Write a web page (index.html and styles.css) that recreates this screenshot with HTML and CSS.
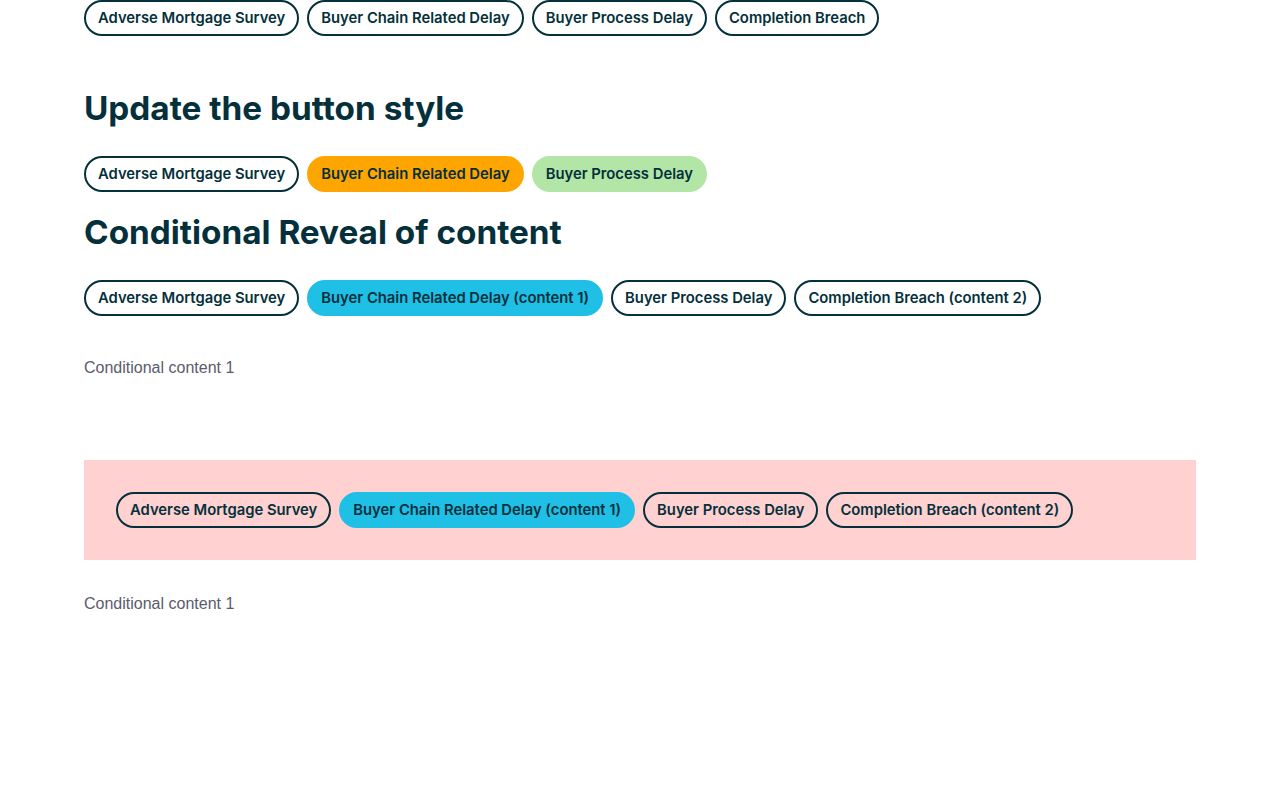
FILE: index.html
```html
<!DOCTYPE html>
<html lang="en">
<head>
<meta charset="utf-8">
<title>Buttons</title>
<link rel="stylesheet" href="styles.css">
</head>
<body>
<main class="page">
  <div class="pills">
    <button class="pill">Adverse Mortgage Survey</button>
    <button class="pill">Buyer Chain Related Delay</button>
    <button class="pill">Buyer Process Delay</button>
    <button class="pill">Completion Breach</button>
  </div>

  <h2 class="heading heading-first">Update the button style</h2>
  <div class="pills">
    <button class="pill">Adverse Mortgage Survey</button>
    <button class="pill pill-orange">Buyer Chain Related Delay</button>
    <button class="pill pill-green">Buyer Process Delay</button>
  </div>

  <h2 class="heading heading-second">Conditional Reveal of content</h2>
  <div class="pills">
    <button class="pill">Adverse Mortgage Survey</button>
    <button class="pill pill-blue">Buyer Chain Related Delay (content 1)</button>
    <button class="pill">Buyer Process Delay</button>
    <button class="pill">Completion Breach (content 2)</button>
  </div>
  <p class="content">Conditional content 1</p>

  <section class="panel">
    <div class="pills">
      <button class="pill">Adverse Mortgage Survey</button>
      <button class="pill pill-blue">Buyer Chain Related Delay (content 1)</button>
      <button class="pill">Buyer Process Delay</button>
      <button class="pill">Completion Breach (content 2)</button>
    </div>
  </section>
  <p class="content content-after-panel">Conditional content 1</p>
</main>
</body>
</html>
```

FILE: styles.css
```css
html, body {
  margin: 0;
  padding: 0;
  background: #ffffff;
}

.page {
  margin: 0 84px;
  color: #04303b;
}

.pills {
  display: flex;
  flex-wrap: wrap;
  gap: 8px;
}

.pill {
  height: 36px;
  box-sizing: border-box;
  padding: 0 12px;
  border: 2px solid #04303b;
  border-radius: 18px;
  background: transparent;
  color: #04303b;
  font-family: "Inter", "Noto Sans", sans-serif;
  font-weight: 600;
  font-size: 14.8px;
  line-height: 32px;
  cursor: pointer;
}

.pill-orange {
  background: #ffa500;
  border-color: #ffa500;
}

.pill-green {
  background: #b3e6a6;
  border-color: #b3e6a6;
}

.pill-blue {
  background: #1fbfe6;
  border-color: #1fbfe6;
}

.heading {
  font-family: "Inter", "Noto Sans", sans-serif;
  font-weight: 700;
  font-size: 33.3px;
  line-height: 40px;
  margin: 0;
  color: #04303b;
}

.heading-first {
  margin-top: 52px;
  margin-bottom: 28px;
}

.heading-second {
  margin-top: 20px;
  margin-bottom: 28px;
}

.content {
  font-family: "Liberation Sans", Arial, sans-serif;
  font-size: 16px;
  line-height: 20px;
  color: #5b5b6b;
  margin: 42px 0 0;
}

.content-after-panel {
  margin-top: 34px;
}

.panel {
  background: #ffd1d1;
  padding: 32px;
  margin-top: 82px;
}
```
